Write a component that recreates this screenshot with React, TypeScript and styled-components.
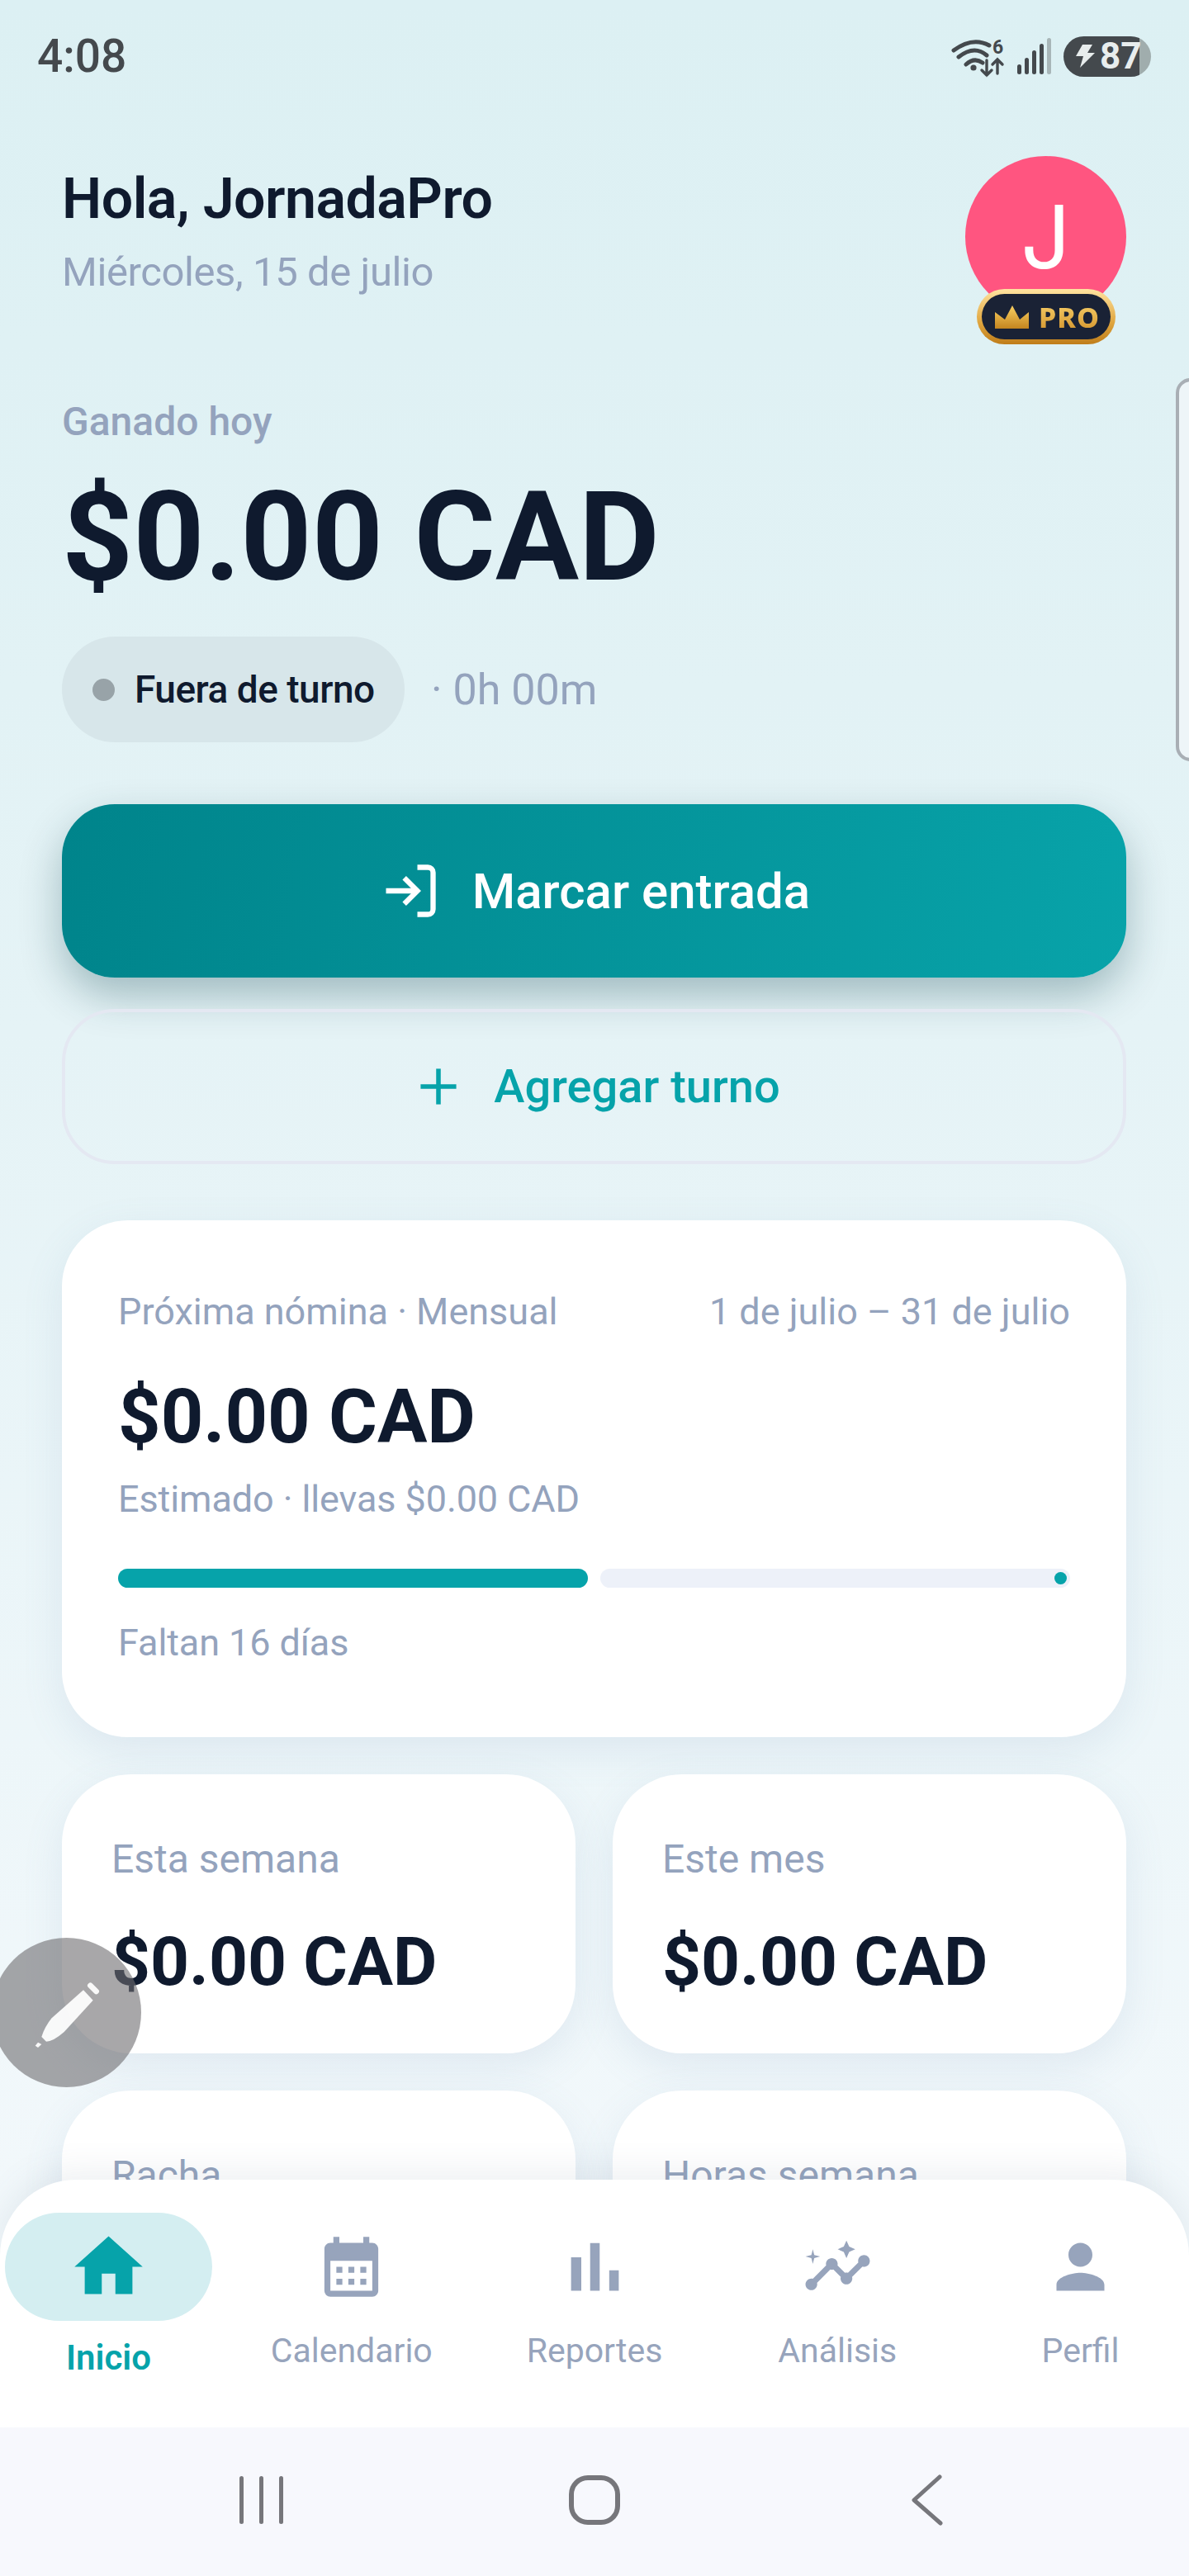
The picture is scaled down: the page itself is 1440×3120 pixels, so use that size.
import { FC, ReactNode } from "react";
import styled, { createGlobalStyle } from "styled-components";
import { LogIn, Plus } from "lucide-react";
import { MdCalendarMonth, MdHome, MdInsights, MdPerson } from "react-icons/md";

const GlobalStyle = createGlobalStyle`
	html, body {
		margin: 0;
		padding: 0;
		background: #f1f7fb;
	}
	* {
		box-sizing: border-box;
	}
`;

const Screen = styled.div`
	position: relative;
	width: 1440px;
	height: 3120px;
	overflow: hidden;
	font-family: Roboto, "Liberation Sans", sans-serif;
	color: #0f1a2e;
	background: linear-gradient(180deg, #dcf0f3 0%, #e5f3f6 40%, #f2f8fb 85%);
`;

const StatusBar = styled.div`
	display: flex;
	justify-content: space-between;
	align-items: center;
	height: 136px;
	padding: 0 46px 0 45px;
`;

const Clock = styled.span`
	font-size: 55px;
	font-weight: 500;
	line-height: 52px;
	color: #44494d;
`;

const StatusIcons = styled.div`
	display: flex;
	align-items: center;
	gap: 14px;
`;

const BatteryPill = styled.div`
	display: flex;
	align-items: center;
	gap: 6px;
	width: 106px;
	height: 49px;
	padding-left: 14px;
	border-radius: 25px;
	background: linear-gradient(90deg, #44494d 87%, #a0adad 87%);
	font-size: 44px;
	font-weight: 700;
	color: #e8eded;
`;

const Content = styled.main`
	padding: 53px 76px 0 75px;
`;

const Header = styled.header`
	display: flex;
	justify-content: space-between;
	height: 195px;
`;

const Greeting = styled.div`
	padding-top: 12px;
`;

const Hello = styled.h1`
	margin: 0;
	font-size: 68px;
	font-weight: 600;
	line-height: 80px;
	letter-spacing: -0.5px;
`;

const DateLine = styled.p`
	margin: 19px 0 0;
	font-size: 49px;
	line-height: 60px;
	letter-spacing: -0.4px;
	color: #94a3bd;
`;

const Avatar = styled.div`
	position: relative;
	display: flex;
	justify-content: center;
	align-items: center;
	width: 195px;
	height: 195px;
	border-radius: 50%;
	background: #ff5580;
	font-family: Inter, sans-serif;
	font-size: 106px;
	color: #fff;
`;

const ProBadge = styled.div`
	position: absolute;
	left: 14px;
	top: 161px;
	width: 168px;
	height: 67px;
	padding: 6px;
	border-radius: 34px;
	background: linear-gradient(180deg, #ffe3a0 0%, #e0a63f 60%, #bf7d1a 100%);
`;

const ProInner = styled.div`
	display: flex;
	align-items: center;
	gap: 12px;
	height: 100%;
	padding-left: 16px;
	border-radius: 28px;
	background: #1a2235;
`;

const ProText = styled.span`
	font-family: "Noto Sans", sans-serif;
	font-size: 34px;
	font-weight: 800;
	line-height: 40px;
	letter-spacing: 1px;
	background: linear-gradient(180deg, #f9d26c 0%, #d1912a 100%);
	-webkit-background-clip: text;
	background-clip: text;
	color: transparent;
`;

const EarnedLabel = styled.p`
	margin: 97px 0 0;
	font-size: 48px;
	font-weight: 500;
	line-height: 60px;
	color: #94a3bd;
`;

const EarnedAmount = styled.div`
	margin-top: 30px;
	font-size: 150.5px;
	font-weight: 700;
	line-height: 160px;
`;

const ShiftRow = styled.div`
	display: flex;
	align-items: center;
	gap: 32px;
	margin-top: 40px;
`;

const ShiftPill = styled.div`
	display: flex;
	align-items: center;
	gap: 24px;
	width: 415px;
	height: 128px;
	padding-left: 37px;
	border-radius: 64px;
	background: #d7e6ea;
	font-size: 46px;
	font-weight: 500;
	letter-spacing: -0.5px;
`;

const ShiftDot = styled.span`
	width: 27px;
	height: 27px;
	border-radius: 50%;
	background: #98a3a8;
`;

const ShiftTime = styled.span`
	font-size: 52px;
	color: #94a3bd;
`;

const ClockInButton = styled.button`
	display: flex;
	justify-content: center;
	align-items: center;
	gap: 38px;
	width: 100%;
	height: 210px;
	margin-top: 75px;
	border: 0;
	border-radius: 64px;
	background: linear-gradient(100deg, #00848b 0%, #08a3a9 100%);
	box-shadow: 0 22px 50px rgba(0, 60, 70, 0.3);
	font-family: inherit;
	font-size: 60px;
	font-weight: 500;
	color: #fff;
`;

const AddShiftButton = styled.button`
	display: flex;
	justify-content: center;
	align-items: center;
	gap: 30px;
	width: 100%;
	height: 188px;
	margin-top: 38px;
	border: 4px solid #e4e8f2;
	border-radius: 64px;
	background: transparent;
	font-family: inherit;
	font-size: 56px;
	font-weight: 500;
	color: #06a3aa;
`;

const PayrollCard = styled.section`
	height: 626px;
	margin-top: 68px;
	padding: 83px 68px 0;
	border-radius: 80px;
	background: #fff;
	box-shadow: 0 16px 50px rgba(100, 130, 170, 0.12);
`;

const PayrollTop = styled.div`
	display: flex;
	justify-content: space-between;
	font-size: 45px;
	line-height: 56px;
	color: #94a3bd;
`;

const PayrollAmount = styled.div`
	margin-top: 50px;
	font-size: 90px;
	font-weight: 700;
	line-height: 100px;
`;

const PayrollNote = styled.p<{ $top: number }>`
	margin: ${(p) => p.$top}px 0 0;
	font-size: 45px;
	line-height: 56px;
	letter-spacing: -0.1px;
	color: #94a3bd;
`;

const ProgressBar = styled.div`
	display: flex;
	gap: 15px;
	height: 23px;
	margin-top: 56px;
`;

const ProgressSegment = styled.div<{ $filled?: boolean }>`
	position: relative;
	flex: 1;
	border-radius: 12px;
	background: ${(p) => (p.$filled ? "#06a3aa" : "#edf1f9")};
`;

const ProgressEnd = styled.span`
	position: absolute;
	right: 4px;
	top: 4px;
	width: 15px;
	height: 15px;
	border-radius: 50%;
	background: #06a3aa;
`;

const StatsGrid = styled.div`
	display: grid;
	grid-template-columns: 1fr 1fr;
	grid-auto-rows: 338px;
	gap: 45px;
	margin-top: 45px;
`;

const StatCard = styled.div`
	padding: 75px 60px 0;
	border-radius: 84px;
	background: #fff;
	box-shadow: 0 16px 50px rgba(100, 130, 170, 0.12);
`;

const StatLabel = styled.p`
	margin: 0;
	font-size: 48px;
	line-height: 56px;
	color: #94a3bd;
`;

const StatValue = styled.div`
	margin-top: 50px;
	font-size: 82px;
	font-weight: 700;
	line-height: 92px;
`;

const EdgeHandle = styled.div`
	position: absolute;
	right: -20px;
	top: 458px;
	width: 36px;
	height: 464px;
	border: 4px solid #a9afb5;
	border-radius: 20px;
	background: #eef5f8;
`;

const EditFab = styled.div`
	position: absolute;
	left: -10px;
	top: 2347px;
	display: flex;
	justify-content: center;
	align-items: center;
	width: 181px;
	height: 181px;
	border-radius: 50%;
	background: rgba(110, 108, 112, 0.6);
`;

const Dock = styled.div`
	position: absolute;
	left: 0;
	right: 0;
	bottom: 0;
`;

const BottomNav = styled.nav`
	display: flex;
	justify-content: space-between;
	height: 300px;
	padding: 40px 6px 0;
	border-radius: 92px 92px 0 0;
	background: #fff;
	box-shadow: 0 -10px 40px rgba(90, 110, 130, 0.1);
`;

const NavItem = styled.div<{ $active?: boolean }>`
	display: flex;
	flex-direction: column;
	align-items: center;
	width: 251px;
	font-size: ${(p) => (p.$active ? 42 : 41)}px;
	font-weight: ${(p) => (p.$active ? 600 : 400)};
	color: ${(p) => (p.$active ? "#06a3aa" : "#97a4bc")};
`;

const NavIconWrap = styled.div<{ $active?: boolean }>`
	display: flex;
	justify-content: center;
	align-items: center;
	width: 251px;
	height: 131px;
	border-radius: 68px;
	background: ${(p) => (p.$active ? "#d4eef1" : "transparent")};
`;

const NavLabel = styled.span<{ $active?: boolean }>`
	margin-top: ${(p) => (p.$active ? 19 : 10)}px;
	line-height: 52px;
`;

const SystemBar = styled.div`
	display: grid;
	grid-template-columns: repeat(3, 403px);
	justify-content: center;
	justify-items: center;
	align-items: center;
	height: 180px;
	padding-bottom: 4px;
	background: #f7f8fd;
`;

const WifiIcon = () => (
	<svg width="70" height="52" viewBox="0 0 70 52" fill="none" stroke="#44494d" strokeLinecap="round">
		<path d="M7 19Q30 2 50 13M13 27Q32 12 47 25M22 36Q32 27 42 34" strokeWidth="5" />
		<circle cx="31" cy="40" r="3.6" fill="#44494d" stroke="none" />
		<path d="M47 31V49M41 43l6 6 6-6M60 47V31M54 36l6-6 6 6" strokeWidth="3.4" />
		<text x="54" y="23" fontFamily="Roboto, sans-serif" fontSize="23" fontWeight="700" fill="#44494d" stroke="none">
			6
		</text>
	</svg>
);

const SignalIcon = () => (
	<svg width="42" height="44" viewBox="0 0 42 44">
		<rect x="0" y="32" width="5" height="12" rx="2.5" fill="#44494d" />
		<rect x="9" y="24" width="5" height="20" rx="2.5" fill="#44494d" />
		<rect x="18" y="15" width="5" height="29" rx="2.5" fill="#44494d" />
		<rect x="27" y="7" width="5" height="37" rx="2.5" fill="#44494d" />
		<rect x="36" y="0" width="5" height="44" rx="2.5" fill="#a8b6b8" />
	</svg>
);

const BoltIcon = () => (
	<svg width="24" height="28" viewBox="0 0 24 28" fill="#e8eded">
		<path d="M9 0h12l-6 10h9L6 28l4-14H1z" />
	</svg>
);

const CrownIcon = () => (
	<svg width="41" height="28" viewBox="0 0 41 28">
		<defs>
			<linearGradient id="crownGold" x1="0" y1="0" x2="0" y2="1">
				<stop offset="0" stopColor="#fad163" />
				<stop offset="1" stopColor="#c4851f" />
			</linearGradient>
		</defs>
		<path d="M0 28V8l12 9 9-17 9 17 11-9v20z" fill="url(#crownGold)" />
	</svg>
);

const PencilIcon = () => (
	<svg width="130" height="120" viewBox="-15 -9 390 360" fill="rgba(255,255,255,0.93)">
		<path d="M240 88L275 125L170 240Q130 275 105 275L88 258Q100 220 125 190Z" />
		<rect x="251" y="72" width="50" height="20" rx="9" transform="rotate(45 276 82)" />
		<path d="M65 290l10-12 13 7-13 12z" />
	</svg>
);

const BarsIcon = () => (
	<svg width="99" height="99" viewBox="0 0 24 24" fill="currentColor">
		<path d="M5 9.2h3V19H5zM10.6 5h2.8v14h-2.8zm5.6 8H19v6h-2.8z" />
	</svg>
);

const RecentsIcon = () => (
	<svg width="56" height="58" viewBox="0 0 56 58" fill="#76767b">
		<rect x="1" y="0" width="5" height="58" rx="2.5" />
		<rect x="25" y="0" width="5" height="58" rx="2.5" />
		<rect x="49" y="0" width="5" height="58" rx="2.5" />
	</svg>
);

const HomeKeyIcon = () => (
	<svg width="62" height="60" viewBox="0 0 62 60" fill="none" stroke="#76767b" strokeWidth="6">
		<rect x="3" y="3" width="56" height="54" rx="20" />
	</svg>
);

const BackIcon = () => (
	<svg width="38" height="62" viewBox="0 0 38 62" fill="none" stroke="#76767b" strokeWidth="5" strokeLinecap="round" strokeLinejoin="round">
		<path d="M34 3L3 31l32 28" />
	</svg>
);

interface NavEntry {
	label: string;
	icon: ReactNode;
	active?: boolean;
}

const navEntries: NavEntry[] = [
	{ label: "Inicio", icon: <MdHome size={99} color="#06a3aa" />, active: true },
	{ label: "Calendario", icon: <MdCalendarMonth size={87} /> },
	{ label: "Reportes", icon: <BarsIcon /> },
	{ label: "Análisis", icon: <MdInsights size={85} /> },
	{ label: "Perfil", icon: <MdPerson size={87} /> },
];

const App: FC = () => {
	return (
		<Screen>
			<GlobalStyle />
			<StatusBar>
				<Clock>4:08</Clock>
				<StatusIcons>
					<WifiIcon />
					<SignalIcon />
					<BatteryPill>
						<BoltIcon />
						87
					</BatteryPill>
				</StatusIcons>
			</StatusBar>

			<Content>
				<Header>
					<Greeting>
						<Hello>Hola, JornadaPro</Hello>
						<DateLine>Miércoles, 15 de julio</DateLine>
					</Greeting>
					<Avatar>
						J
						<ProBadge>
							<ProInner>
								<CrownIcon />
								<ProText>PRO</ProText>
							</ProInner>
						</ProBadge>
					</Avatar>
				</Header>

				<EarnedLabel>Ganado hoy</EarnedLabel>
				<EarnedAmount>$0.00 CAD</EarnedAmount>
				<ShiftRow>
					<ShiftPill>
						<ShiftDot />
						Fuera de turno
					</ShiftPill>
					<ShiftTime>· 0h 00m</ShiftTime>
				</ShiftRow>

				<ClockInButton>
					<LogIn size={76} strokeWidth={2} strokeLinecap="butt" strokeLinejoin="miter" />
					Marcar entrada
				</ClockInButton>
				<AddShiftButton>
					<Plus size={74} strokeWidth={1.8} strokeLinecap="butt" />
					Agregar turno
				</AddShiftButton>

				<PayrollCard>
					<PayrollTop>
						<span>Próxima nómina · Mensual</span>
						<span>1 de julio – 31 de julio</span>
					</PayrollTop>
					<PayrollAmount>$0.00 CAD</PayrollAmount>
					<PayrollNote $top={21}>Estimado · llevas $0.00 CAD</PayrollNote>
					<ProgressBar>
						<ProgressSegment $filled />
						<ProgressSegment>
							<ProgressEnd />
						</ProgressSegment>
					</ProgressBar>
					<PayrollNote $top={39}>Faltan 16 días</PayrollNote>
				</PayrollCard>

				<StatsGrid>
					<StatCard>
						<StatLabel>Esta semana</StatLabel>
						<StatValue>$0.00 CAD</StatValue>
					</StatCard>
					<StatCard>
						<StatLabel>Este mes</StatLabel>
						<StatValue>$0.00 CAD</StatValue>
					</StatCard>
					<StatCard>
						<StatLabel>Racha</StatLabel>
					</StatCard>
					<StatCard>
						<StatLabel>Horas semana</StatLabel>
					</StatCard>
				</StatsGrid>
			</Content>

			<EdgeHandle />
			<EditFab>
				<PencilIcon />
			</EditFab>

			<Dock>
				<BottomNav>
					{navEntries.map((entry) => (
						<NavItem key={entry.label} $active={entry.active}>
							<NavIconWrap $active={entry.active}>{entry.icon}</NavIconWrap>
							<NavLabel $active={entry.active}>{entry.label}</NavLabel>
						</NavItem>
					))}
				</BottomNav>
				<SystemBar>
					<RecentsIcon />
					<HomeKeyIcon />
					<BackIcon />
				</SystemBar>
			</Dock>
		</Screen>
	);
};

export default App;
